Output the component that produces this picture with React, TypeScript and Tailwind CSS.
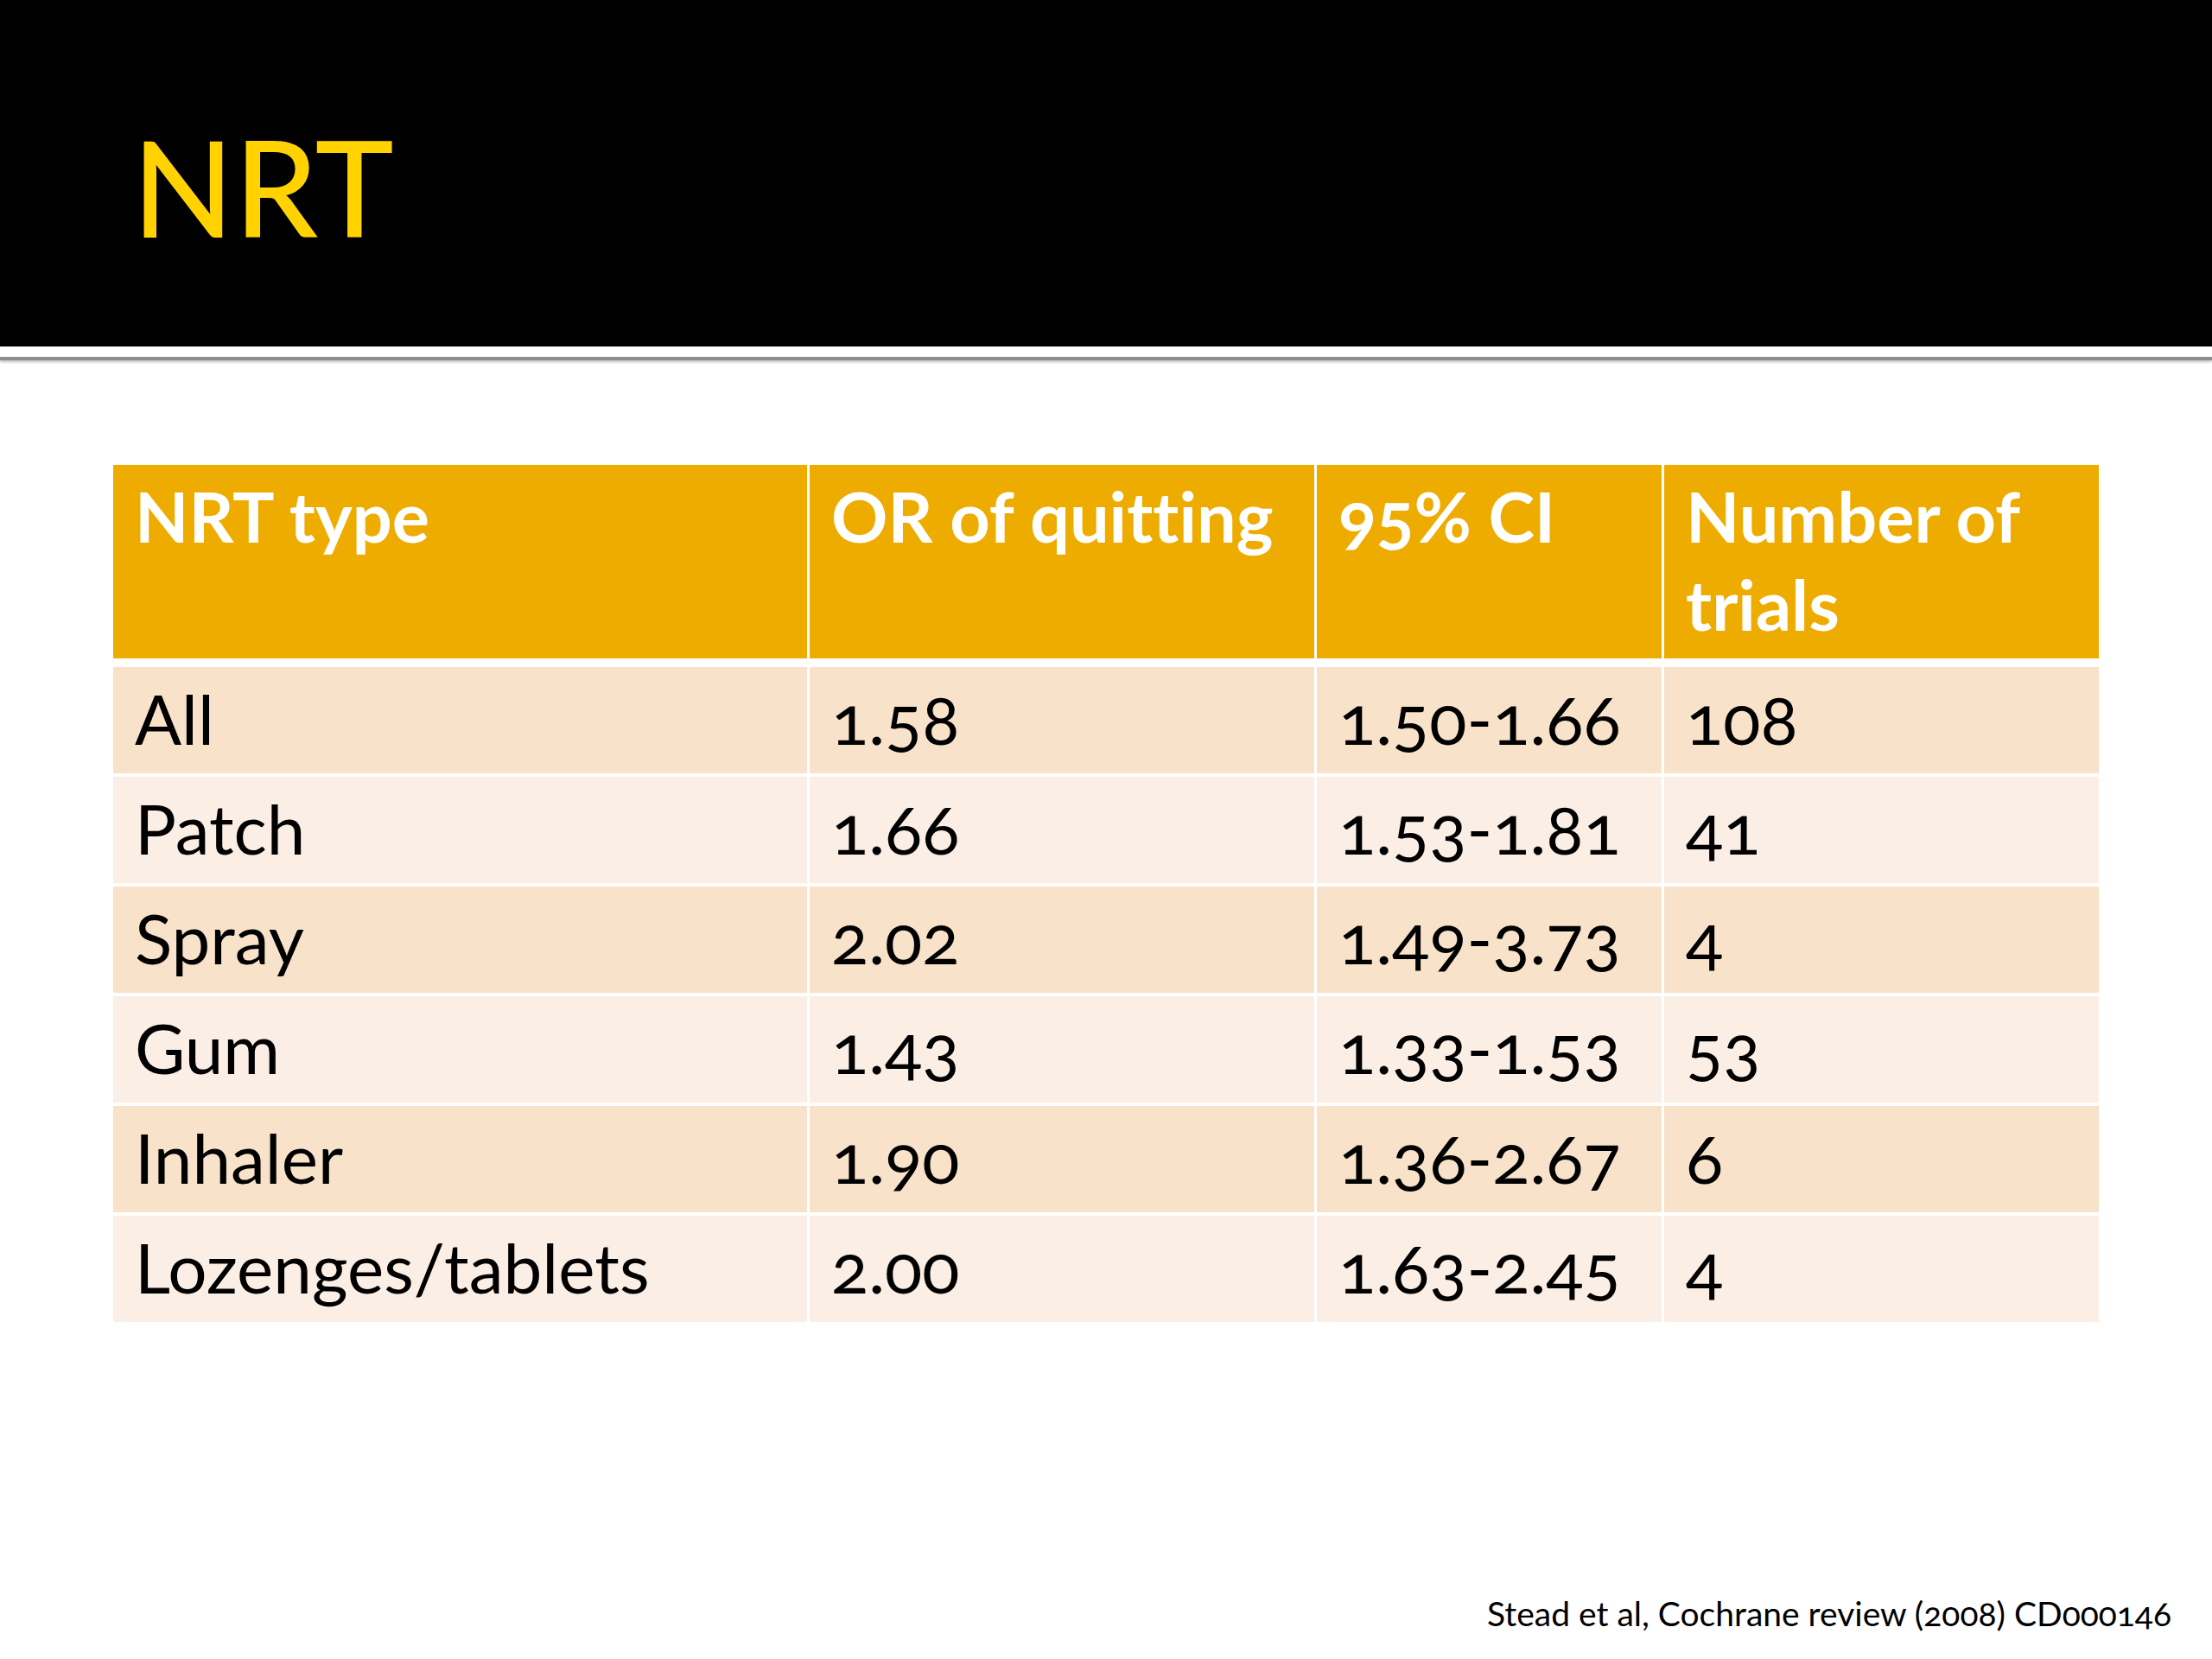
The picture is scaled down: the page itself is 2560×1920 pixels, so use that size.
const rows = [
  { type: "All", or: "1.58", ci: "1.50-1.66", trials: "108" },
  { type: "Patch", or: "1.66", ci: "1.53-1.81", trials: "41" },
  { type: "Spray", or: "2.02", ci: "1.49-3.73", trials: "4" },
  { type: "Gum", or: "1.43", ci: "1.33-1.53", trials: "53" },
  { type: "Inhaler", or: "1.90", ci: "1.36-2.67", trials: "6" },
  { type: "Lozenges/tablets", or: "2.00", ci: "1.63-2.45", trials: "4" },
]

const cols = "grid grid-cols-[803px_584px_399px_503px] gap-x-[3px]"

function HeaderRow() {
  const cell = "bg-[#EEAC00] h-[224px] pl-[25px] pr-[12px] pt-[8px] text-white font-bold text-[81px] leading-[102px]"
  return (
    <div className={cols}>
      <div className={cell}>NRT type</div>
      <div className={cell}>OR of quitting</div>
      <div className={`${cell} oldstyle-nums`}>95% CI</div>
      <div className={cell}>
        Number of
        <br />
        trials
      </div>
    </div>
  )
}

function BodyRow({ row, index }: { row: (typeof rows)[number]; index: number }) {
  const bg = index % 2 === 0 ? "bg-[#F8E2CA]" : "bg-[#FBEEE4]"
  const cell = `${bg} h-[123px] pl-[25px] pt-[11px] text-black text-[80px] leading-[96px] oldstyle-nums`
  return (
    <div className={cols}>
      <div className={cell}>{row.type}</div>
      <div className={cell}>{row.or}</div>
      <div className={cell}>{row.ci}</div>
      <div className={cell}>{row.trials}</div>
    </div>
  )
}

export default function App() {
  return (
    <div className="w-[2560px] h-[1920px] bg-white overflow-hidden font-[Lato,'Noto_Sans',sans-serif] [font-variant-ligatures:none]">
      {/* title bar */}
      <div className="h-[401px] bg-black pl-[153px] pt-[139px]">
        <h1 className="text-[154px] leading-none font-medium text-[#FFD200]">NRT</h1>
      </div>
      <div className="mt-[12px] h-[4px] bg-[#8c8c8c] shadow-[0_2px_3px_rgba(0,0,0,0.25)]" />

      {/* table */}
      <div className="mt-[121px] ml-[131px] w-[2298px] flex flex-col">
        <HeaderRow />
        <div className="mt-[10px] flex flex-col gap-y-[4px]">
          {rows.map((r, i) => (
            <BodyRow key={r.type} row={r} index={i} />
          ))}
        </div>
      </div>

      {/* source */}
      <div className="mt-[318px] pr-[47px] text-right text-[39px] leading-none text-black oldstyle-nums">
        Stead et al, Cochrane review (2008) CD000146
      </div>
    </div>
  )
}
